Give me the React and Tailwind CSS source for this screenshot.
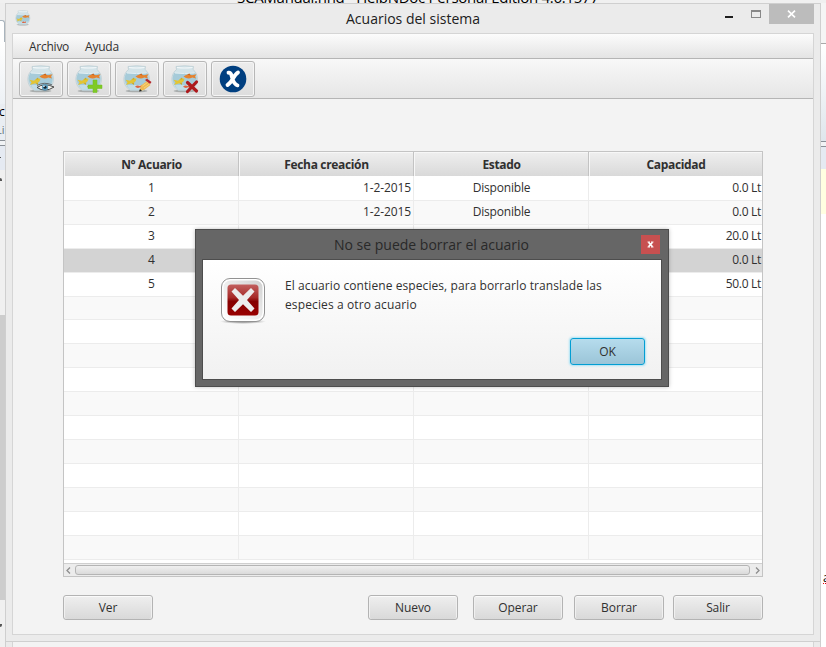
import React from 'react';

const rows = [
  ['1', '1-2-2015', 'Disponible', '0.0 Lt'],
  ['2', '1-2-2015', 'Disponible', '0.0 Lt'],
  ['3', '', '', '20.0 Lt'],
  ['4', '', '', '0.0 Lt'],
  ['5', '', '', '50.0 Lt'],
  ...Array.from({ length: 10 }, () => ['', '', '', '']),
];

function FishBowl({ size = 32, children }) {
  return (
    <svg width={size} height={size} viewBox="0 0 32 32">
      <ellipse cx="15.5" cy="28" rx="11" ry="1.3" fill="#a9adad" />
      <path d="M7 3.500 Q15.500 2 24.500 3.500 L24 6.500 Q28.500 10 28.500 16.500 Q28 23.500 22 27.500 L9.500 27.500 Q3 23.500 2.800 16.500 Q3 10 7.500 6.500Z" fill="#d3e3e8" stroke="#b9cbd1" strokeWidth=".7" />
      <path d="M5.200 10 L26.200 10 Q29 15.500 26.500 21 Q24.500 25 21.500 26.800 L10 26.800 Q6.500 25 4.800 21 Q2.300 15.500 5.200 10Z" fill="#a6cbd9" />
      <path d="M6 22 L25.500 22 Q24 25 21.500 26.800 L10 26.800 Q7.500 25.500 6 22Z" fill="#c3dde6" />
      <path d="M8 4.500 Q15.500 5.500 23.500 4.500" fill="none" stroke="#f3f8f9" strokeWidth="1.200" />
      <path d="M6 10 Q15.500 11.200 25.500 10" fill="none" stroke="#e3eff3" strokeWidth="1" />
      <path d="M14.500 13.400 Q18.500 10.200 23 12.200 L27.500 11.200 L26 13.600 L27 15.600 L23.300 14.600 Q18.500 17 14.500 13.400Z" fill="#e5832f" />
      <path d="M18 11.600 L20.500 10.500 L21.500 12.500Z" fill="#c9641d" />
      <path d="M15.500 15.800 Q14.500 20.600 9.500 20.400 L5 22 L6.500 19.400 L4.500 16.800 L9 17.800 Q11.500 14.800 15.500 15.800Z" fill="#e3c534" />
      <path d="M10.500 16.600 L13 14.600 L13.500 16.400Z M10.500 20 L12.800 22 L13.200 19.800Z" fill="#cdaa24" />
      <path d="M14 23.800 Q16 21.500 19 23 L21 21.800 V24.800 L19 24.300 Q16.500 25.800 14 23.800Z" fill="#de6341" />
      {children}
    </svg>
  );
}

function ToolButton({ children }) {
  return (
    <button className="flex h-9 w-11 items-center justify-center rounded-[3px] border border-[#b7b7b7] bg-gradient-to-b from-[#ededed] to-[#dddddd] shadow-[inset_0_0_0_1px_#f5f5f5]">
      {children}
    </button>
  );
}

function Button({ children }) {
  return (
    <button className="h-[25px] w-[90px] rounded-[3px] border border-[#b3b3b3] bg-gradient-to-b from-[#efefef] to-[#d9d9d9] text-[12px] leading-[23px] tracking-[-0.1px] shadow-[inset_0_1px_0_#fafafa,inset_1px_0_0_#f0f0f0,inset_-1px_0_0_#f0f0f0]">
      {children}
    </button>
  );
}

function Toolbar() {
  return (
    <div className="flex h-10 items-start gap-1 border-b border-[#b5b5b5] bg-gradient-to-b from-[#f8f8f8] to-[#e6e6e6] pt-[2px] pl-[6px]">
      <ToolButton>
        <FishBowl>
          <path d="M12 24.500 Q19 19.500 29 24 Q20 30 12 24.500Z" fill="#f4f4ee" stroke="#3a3a3a" strokeWidth=".9" />
          <circle cx="20" cy="24.300" r="3.100" fill="#5a9dc0" />
          <circle cx="20" cy="24.300" r="1.500" fill="#15232b" />
          <circle cx="19" cy="23.200" r=".8" fill="#fff" />
          <path d="M12 22.500 Q19 18.500 27 21.800" fill="none" stroke="#545454" strokeWidth=".8" />
        </FishBowl>
      </ToolButton>
      <ToolButton>
        <FishBowl><path d="M20 17h4v5h5v3.500h-5v4h-4v-4h-5V22h5Z" fill="#7fca26" stroke="#72bd20" strokeWidth=".5" /></FishBowl>
      </ToolButton>
      <ToolButton>
        <FishBowl>
          <path d="M18.500 28 L20 22.500 L26 18 L29.500 22 L23 27Z" fill="#f0bb55" />
          <path d="M18 28.500 L19 26 L21 28Z" fill="#222" />
          <path d="M24 17 L26 15.700 L30.500 19 L29 21Z" fill="#b5242a" />
          <path d="M21.500 23 L26.500 19.500 M23 25 L28.500 21" stroke="#f8db83" strokeWidth=".8" />
        </FishBowl>
      </ToolButton>
      <ToolButton>
        <FishBowl><path d="M18.500 19.500 L27.500 28 M27.500 19 L18.500 28.500" stroke="#ad191c" strokeWidth="3.200" strokeLinecap="round" /></FishBowl>
      </ToolButton>
      <ToolButton>
        <svg width="30" height="30" viewBox="0 0 30 30">
          <circle cx="15" cy="15" r="13.300" fill="#003f80" />
          <path d="M10.500 8.700 C15 7.500 13 20 19.500 21.300 M20 8.500 C15.500 11 14.500 18 9.500 21" fill="none" stroke="#fff" strokeWidth="3.800" strokeLinecap="round" />
        </svg>
      </ToolButton>
    </div>
  );
}

function Header({ children, last }) {
  return (
    <div className={`border-b border-[#c3c3c3] bg-gradient-to-b from-[#efefef] to-[#d8d8d8] pt-px pl-px text-center text-[12px] leading-[24px] font-bold tracking-[-0.34px] shadow-[inset_1px_1px_0_#f7f7f7] ${last ? '' : 'border-r'}`}>
      {children}
    </div>
  );
}

function Table() {
  return (
    <div className="flex h-[426px] w-[700px] flex-col overflow-hidden border border-[#c4c4c4] bg-white">
      <div className="grid h-6 shrink-0 grid-cols-[175px_175px_175px_173px]">
        <Header>N° Acuario</Header>
        <Header>Fecha creación</Header>
        <Header>Estado</Header>
        <Header last>Capacidad</Header>
      </div>
      <div className="h-[387px] overflow-hidden text-[12px] leading-[24px] tracking-[-0.1px]">
        {[...rows, ['', '', '', '']].map((r, i) => (
          <div key={i} className={`grid h-6 grid-cols-[175px_175px_175px_173px] ${i === 3 ? 'bg-[#d3d3d3]' : i % 2 ? 'bg-[#f9f9f9]' : 'bg-white'}`}>
            <div className="border-r border-b border-[#ececec] pl-px text-center">{r[0]}</div>
            <div className="border-r border-b border-[#ececec] pr-[2px] text-right">{r[1]}</div>
            <div className="border-r border-b border-[#ececec] pl-px text-center tracking-[-0.2px]">{r[2]}</div>
            <div className="border-b border-[#ececec] pr-[1px] text-right tracking-[-0.3px]">{r[3]}</div>
          </div>
        ))}
      </div>
      <div className="flex h-[13px] items-center border-t border-[#cfcfcf] bg-[#ececec] px-[1px]">
        <svg className="shrink-0" width="6" height="9" viewBox="0 0 6 9"><path d="M5 1.500 L2 4.500 L5 7.500" fill="none" stroke="#8d8d8d" strokeWidth="1.300" /></svg>
        <div className="ml-[4px] h-[10px] w-[675px] rounded-[3px] border border-[#b4b4b4] bg-gradient-to-b from-[#f0f0f0] to-[#dadada]" />
        <svg className="ml-[5px] shrink-0" width="5" height="9" viewBox="0 0 5 9"><path d="M1 1.500 L4 4.500 L1 7.500" fill="none" stroke="#8d8d8d" strokeWidth="1.300" /></svg>
      </div>
    </div>
  );
}

function ErrorIcon() {
  return (
    <svg className="shrink-0" width="46" height="48" viewBox="0 0 46 48">
      <defs>
        <linearGradient id="red" x1="0" y1="0" x2="0" y2="1">
          <stop offset="0" stopColor="#c2605f" /><stop offset=".42" stopColor="#a62a28" />
          <stop offset=".55" stopColor="#850000" /><stop offset="1" stopColor="#990000" />
        </linearGradient>
        <linearGradient id="frame" x1="0" y1="1" x2="1" y2="0">
          <stop offset="0" stopColor="#fff" /><stop offset=".5" stopColor="#ededed" /><stop offset="1" stopColor="#d0d0d0" />
        </linearGradient>
        <radialGradient id="iconShadow"><stop offset="0" stopColor="#777" /><stop offset="1" stopColor="#777" stopOpacity="0" /></radialGradient>
      </defs>
      <ellipse cx="23" cy="44.500" rx="23" ry="2.500" fill="url(#iconShadow)" />
      <rect x="1.500" y="1.500" width="43" height="43" rx="8.500" fill="#fff" stroke="#929292" />
      <rect x="3.500" y="3.500" width="39" height="39" rx="7" fill="url(#frame)" />
      <rect x="7.500" y="7.500" width="31" height="31" rx="3.500" fill="url(#red)" />
      <path d="M11.500 14.500 L15 11 L23 18.800 L31 11 L34.500 14.500 L27 23 L34.500 31.500 L31 35 L23 27.200 L15 35 L11.500 31.500 L19 23Z" fill="#ececec" />
    </svg>
  );
}

function Dialog() {
  return (
    <div role="dialog" className="absolute top-[229px] left-[195px] flex h-[158px] w-[474px] flex-col border border-[#4d4d4d] bg-[#666666] px-[6px] pb-[6px] shadow-[0_0_4px_rgba(0,0,0,0.25)]">
      <div className="flex h-[29px] items-start">
        <div className="w-[20px]" />
        <div className="flex-1 text-center text-[14px] leading-[30px] text-[#292929]">No se puede borrar el acuario</div>
        <button className="mt-[5px] mr-[2px] flex h-[19px] w-[19px] items-center justify-center bg-[#c75050]">
          <svg width="7" height="7" viewBox="0 0 7 7"><path d="M1.500 1.200 L5.500 5.800 M5.500 1.200 L1.500 5.800" stroke="#fff" strokeWidth="1.700" /><path d="M.5 1H3 M4 1H6.500 M.5 6H3 M4 6H6.500" stroke="#fff" strokeWidth=".9" /></svg>
        </button>
      </div>
      <div className="flex flex-1 flex-col border border-[#4d4d4d] bg-gradient-to-b from-white to-[#f1f1f1]">
        <div className="flex h-[78px] items-start pt-[17px] pl-[17px]">
          <ErrorIcon />
          <p className="-mt-px ml-[19px] w-[335px] text-[12px] leading-[19px] tracking-[0.08px]">El acuario contiene especies, para borrarlo translade las<br /><span className="tracking-[0.12px]">especies a otro acuario</span></p>
        </div>
        <div className="flex justify-end pr-[16px]">
          <button className="h-[27px] w-[75px] rounded-[3px] border border-[#039ed3] bg-gradient-to-b from-[#b6dced] to-[#9bc5d8] text-[12px] shadow-[0_0_2px_1px_#a8e2f5]">OK</button>
        </div>
      </div>
    </div>
  );
}

export default function App() {
  return (
    <div className="relative flex h-[647px] w-[826px] flex-col overflow-hidden bg-[#ececec] font-['Open_Sans','Noto_Sans',sans-serif] text-[#303030]">
      <div className="h-[3px] shrink-0 overflow-hidden bg-[#f0f0f0] pl-[237px] text-[15px] whitespace-nowrap text-black">
        <div className="-mt-[13px] leading-[20px] tracking-[-0.27px]">SCAManual.hnd - HelpNDoc Personal Edition 4.6.1577</div>
      </div>
      <div className="flex h-[644px]">
        <aside className="flex w-[5px] shrink-0 flex-col overflow-hidden text-[11px] leading-[16px]">
          <div className="h-[17px] bg-[#eeeeee]" />
          <div className="h-[22px] rounded-tr-[3px] border-t border-r border-[#a9b4bd] bg-white" />
          <div className="h-[62px] bg-gradient-to-b from-white to-[#edf1f5]" />
          <div className="h-[18px] bg-[#e9edf2] text-[12px] text-black"><span className="-ml-[1px]">c</span></div>
          <div className="h-[18px] bg-[#e9edf2] whitespace-nowrap text-[#667078]"><span className="-ml-[4px]">Li</span></div>
          <div className="h-[6px] border-y border-[#8a9097] bg-[#f1f3f5]" />
          <div className="h-[24px] bg-[#e5eaf2] pt-[11px]"><div className="h-px w-px bg-[#555]" /></div>
          <div className="h-[145px] bg-[#f0f0f0] pt-[8px]"><div className="h-[3px] w-[2px] rounded-tr-[2px] bg-[#555]" /></div>
          <div className="h-[285px] bg-[#cdcdcd]" />
          <div className="flex-1 bg-[#f0f0f0] pt-[24px]"><div className="h-[3px] w-[2px] rounded-br-[2px] bg-[#555]" /></div>
        </aside>
        <div className="flex w-[816px] shrink-0 flex-col">
          <main className="flex h-[639px] shrink-0 flex-col border border-[#cfcfcf] bg-[#ebebeb] px-[6px]">
            <header className="flex h-[29px] shrink-0 items-start">
              <div className="w-[94px] pt-[5px] pl-[2px]"><FishBowl size={18} /></div>
              <h1 className="flex-1 text-center text-[14px] leading-[30px] text-[#202020]">Acuarios del sistema</h1>
              <div className="flex w-[94px] justify-end">
                <div className="mt-[12px] h-[2px] w-[8px] bg-[#1e1e1e]" />
                <div className="mt-[6px] ml-[18px] h-[8px] w-[10px] border border-t-2 border-[#888]" />
                <button className="ml-[8px] flex h-[20px] w-[45px] items-center justify-center bg-[#bcbcbc]">
                  <svg width="9" height="8" viewBox="0 0 9 8"><path d="M1 .7 L8 7.300 M8 .7 L1 7.300" stroke="#fff" strokeWidth="1.700" /></svg>
                </button>
              </div>
            </header>
            <section className="flex h-[602px] shrink-0 flex-col border border-[#d5d5d5] bg-[#f3f3f3]">
              <nav className="flex h-[25px] shrink-0 gap-4 border-b border-[#b5b5b5] bg-gradient-to-b from-[#fcfcfc] to-[#e4e4e4] pl-4 text-[12px] leading-[26px] tracking-[-0.25px]">
                <span>Archivo</span><span>Ayuda</span>
              </nav>
              <Toolbar />
              <div className="flex w-[750px] flex-col pt-[52px] pl-[50px]">
                <Table />
                <div className="mt-[18px] flex w-[700px]">
                  <Button>Ver</Button>
                  <div className="ml-[215px] flex gap-[15px]"><Button>Nuevo</Button><Button>Operar</Button></div>
                  <div className="ml-[11px] flex gap-[9px]"><Button>Borrar</Button><Button>Salir</Button></div>
                </div>
              </div>
            </section>
          </main>
          <div className="flex h-[5px] border-x border-[#cfcfcf] bg-[#ebebeb] px-[6px]"><div className="h-full w-full border-x border-[#d5d5d5] bg-[#f3f3f3]" /></div>
        </div>
        <aside className="flex w-[5px] shrink-0 flex-col overflow-hidden">
          <div className="h-[40px] bg-[#f5f5f5]" />
          <div className="h-[98px] border-t border-[#a9a9a9] bg-gradient-to-b from-white to-[#dfe6ec]" />
          <div className="h-[6px] border-y border-[#8a9097] bg-[#f1f3f5]" />
          <div className="h-[22px] bg-[#e5eaf2]" />
          <div className="h-[45px] bg-[#ffffe1]" />
          <div className="flex-1 bg-white pt-[356px] pl-[2px] text-[12px] leading-[16px] text-black"><span className="underline decoration-red-600 decoration-dotted">a</span></div>
        </aside>
      </div>
      <Dialog />
    </div>
  );
}
